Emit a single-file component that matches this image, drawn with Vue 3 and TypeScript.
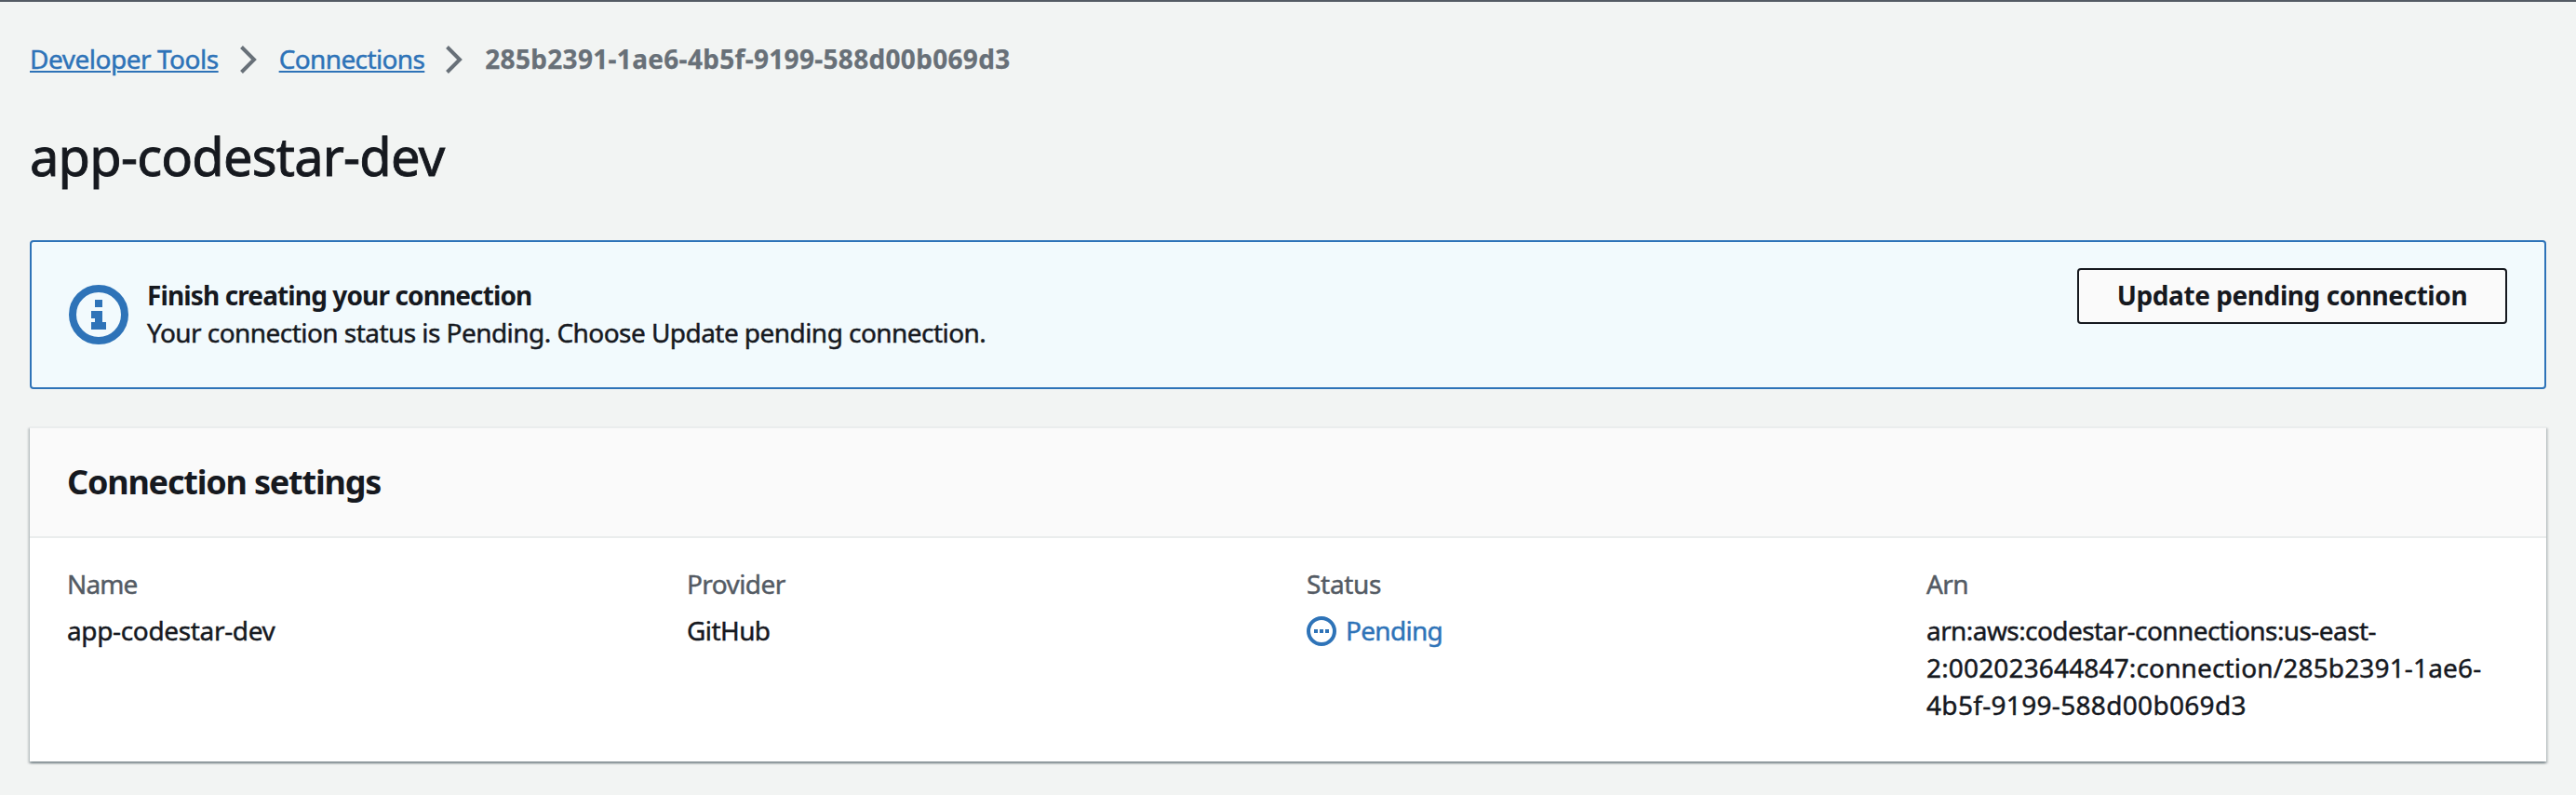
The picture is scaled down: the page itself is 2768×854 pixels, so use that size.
<script setup lang="ts">
interface Crumb {
  label: string
  href: string
}

const crumbs: Crumb[] = [
  { label: 'Developer Tools', href: '#tools' },
  { label: 'Connections', href: '#connections' },
]
const connectionId = '285b2391-1ae6-4b5f-9199-588d00b069d3'
const connectionName = 'app-codestar-dev'
</script>

<template>
  <main class="page">
    <nav class="breadcrumbs">
      <template v-for="crumb in crumbs" :key="crumb.label">
        <a class="crumb" :href="crumb.href">{{ crumb.label }}</a>
        <svg class="chevron" viewBox="0 0 18 32" fill="none" stroke="currentColor" stroke-width="4">
          <path d="M1.5 2.5 15 16 1.5 29.5" />
        </svg>
      </template>
      <span class="current">{{ connectionId }}</span>
    </nav>

    <h1 class="title">{{ connectionName }}</h1>

    <section class="banner">
      <svg class="info" viewBox="0 0 64 64">
        <circle cx="32" cy="32" r="28" fill="none" stroke="currentColor" stroke-width="8" />
        <path fill="currentColor" d="M28 16h8v8h-8zM24 28h12v12h4v8H24v-8h4v-4h-4z" />
      </svg>
      <div class="message">
        <div class="message-title">Finish creating your connection</div>
        <div class="message-text">Your connection status is Pending. Choose Update pending connection.</div>
      </div>
      <button class="update" type="button">Update pending connection</button>
    </section>

    <section class="card">
      <header class="card-header">
        <h2>Connection settings</h2>
      </header>
      <div class="fields">
        <div class="field">
          <div class="label name-label">Name</div>
          <div class="value name">{{ connectionName }}</div>
        </div>
        <div class="field">
          <div class="label">Provider</div>
          <div class="value">GitHub</div>
        </div>
        <div class="field">
          <div class="label status-label">Status</div>
          <div class="value status">
            <svg class="pending" viewBox="0 0 32 32">
              <circle cx="16" cy="16" r="14" fill="none" stroke="currentColor" stroke-width="4" />
              <path fill="currentColor" d="M8 14h4v4H8zM14 14h4v4h-4zM20 14h4v4h-4z" />
            </svg>
            <span>Pending</span>
          </div>
        </div>
        <div class="field">
          <div class="label">Arn</div>
          <div class="value arn">
            <span class="arn-service">arn:aws:codestar-connections:us-east-</span>
            <span class="arn-resource">2:002023644847:connection/285b2391-1ae6-</span>
            <span class="arn-tail">4b5f-9199-588d00b069d3</span>
          </div>
        </div>
      </div>
    </section>
  </main>
</template>

<style>
body {
  background: #f2f4f3;
}
</style>

<style scoped>
.page {
  box-sizing: border-box;
  height: 854px;
  border-top: 2px solid #545b64;
  padding: 41px 32px 0;
  background: #f2f4f3;
  color: #16191f;
  font: 400 28px/40px "Noto Sans", "Open Sans", sans-serif;
  letter-spacing: -0.58px;
  -webkit-text-stroke: 0.45px currentColor;
}

.breadcrumbs {
  display: flex;
  align-items: center;
  height: 40px;
}

.crumb {
  color: #2e73b8;
  letter-spacing: -0.48px;
  text-decoration: underline;
  text-decoration-thickness: 2px;
  text-underline-offset: 2px;
  white-space: nowrap;
}

.chevron ~ .crumb {
  letter-spacing: -0.62px;
}

.chevron {
  width: 18px;
  height: 32px;
  margin: 2px 24px 0 23px;
  color: #687078;
}

.current {
  color: #687078;
  font-weight: 700;
  letter-spacing: 0.31px;
  -webkit-text-stroke: 0.25px currentColor;
}

.title {
  margin: 48px 0 0;
  font-size: 56px;
  font-weight: 400;
  line-height: 72px;
  letter-spacing: -0.8px;
  -webkit-text-stroke: 0.9px currentColor;
}

.banner {
  box-sizing: border-box;
  display: flex;
  align-items: flex-start;
  height: 160px;
  margin-top: 55px;
  padding: 28px 40px 0;
  border: 2px solid #2e73b8;
  border-radius: 4px;
  background: #f2fafd;
}

.info {
  width: 64px;
  height: 64px;
  margin-top: 18px;
  color: #2e73b8;
}

.message {
  flex: 1;
  margin: 9px 0 0 20px;
}

.message-title {
  font-weight: 700;
  letter-spacing: -0.88px;
  -webkit-text-stroke: 0;
}

.message-text {
  letter-spacing: -0.55px;
}

.update {
  box-sizing: border-box;
  width: 462px;
  height: 60px;
  padding: 0 0 2px;
  border: 2px solid #16191f;
  border-radius: 4px;
  background: #fafafa;
  color: #16191f;
  font: inherit;
  font-weight: 700;
  letter-spacing: -0.43px;
  -webkit-text-stroke: 0;
}

.card {
  box-sizing: border-box;
  height: 360px;
  margin-top: 40px;
  border-top: 2px solid #eaeded;
  background: #fff;
  box-shadow:
    0 2px 2px 0 rgba(0, 28, 36, 0.3),
    2px 2px 2px 0 rgba(0, 28, 36, 0.15),
    -2px 2px 2px 0 rgba(0, 28, 36, 0.15);
}

.card-header {
  box-sizing: border-box;
  height: 118px;
  padding: 34px 40px 0;
  border-bottom: 2px solid #eaeded;
  background: #fafafa;
}

.card-header h2 {
  margin: 0;
  font-size: 36px;
  line-height: 48px;
  letter-spacing: -1.2px;
  -webkit-text-stroke: 0;
}

.fields {
  display: grid;
  grid-template-columns: repeat(4, 626px);
  column-gap: 40px;
  padding: 29px 40px 0;
}

.label {
  color: #545b64;
}

.name-label {
  letter-spacing: -0.9px;
}

.status-label {
  letter-spacing: -0.3px;
}

.value {
  margin-top: 10px;
}

.name {
  letter-spacing: -0.35px;
}

.status {
  display: flex;
  align-items: center;
  gap: 10px;
  color: #2e73b8;
  letter-spacing: -0.7px;
}

.pending {
  width: 32px;
  height: 32px;
  margin-top: 2px;
}

.arn span {
  display: block;
  white-space: nowrap;
}

.arn-resource {
  letter-spacing: 0.15px;
}

.arn-tail {
  letter-spacing: 0.32px;
}
</style>
